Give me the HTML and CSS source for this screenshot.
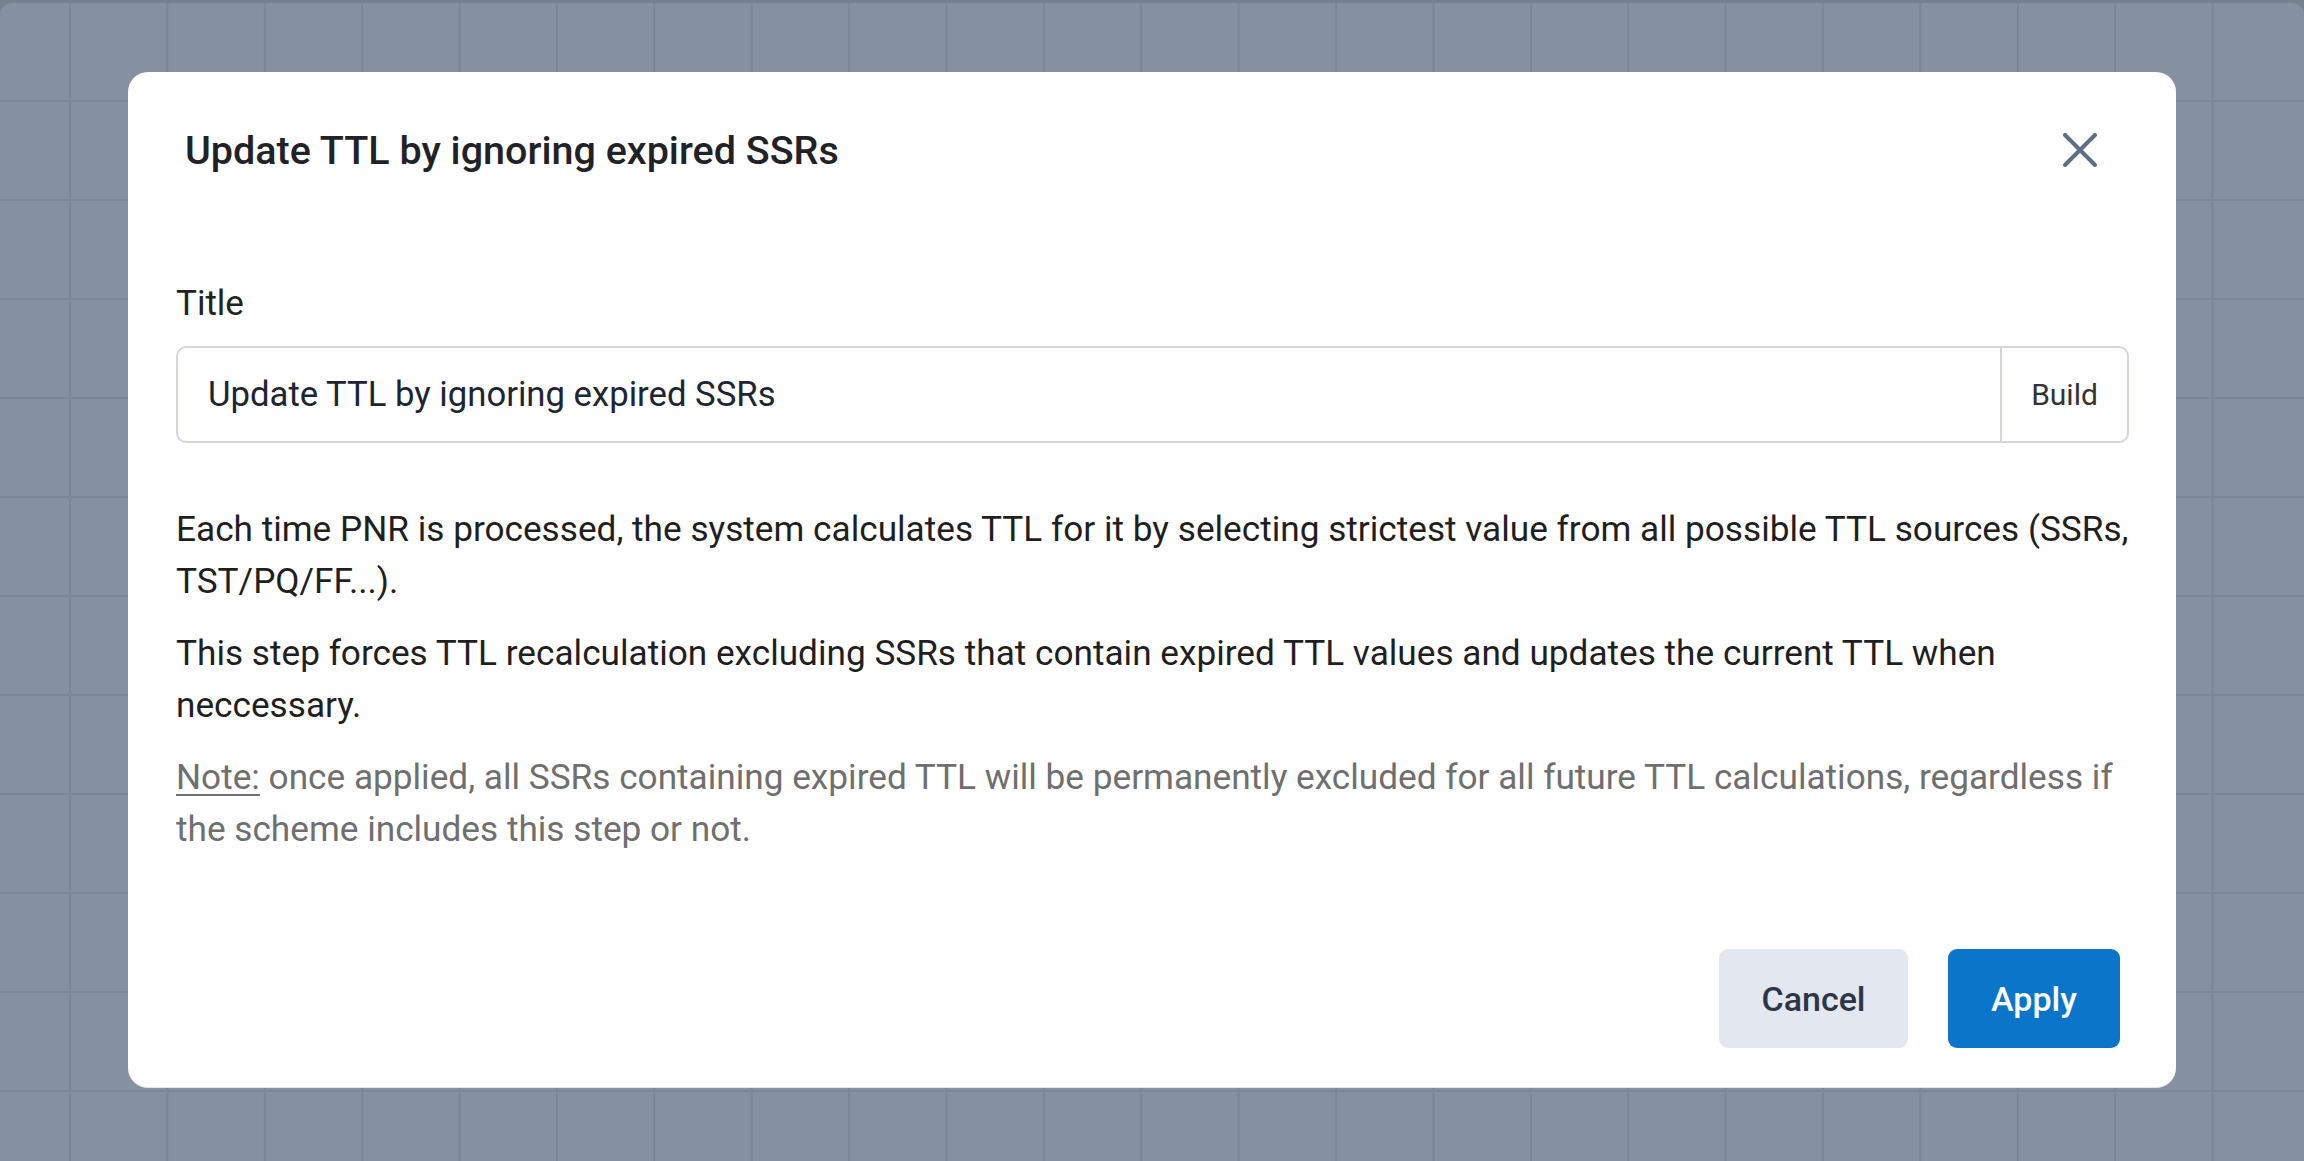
FILE: index.html
```html
<!DOCTYPE html>
<html lang="en">
<head>
    <meta charset="UTF-8">
    <meta name="viewport" content="width=device-width, initial-scale=1.0">
    <title>Update TTL</title>

    <!-- CSS Styles -->
    <link rel="stylesheet" href="styles.css">
</head>
<body>

    <!-- Canvas behind the dialog -->
    <div class="canvas">

        <!-- Dialog -->
        <div class="modal">
            <div class="modal-header">
                <h2 class="modal-title">Update TTL by ignoring expired SSRs</h2>
                <button class="close-btn" aria-label="Close">
                    <svg viewBox="0 0 34 34" width="34" height="34">
                        <path d="M2 2 L32 32 M32 2 L2 32" stroke="currentColor" stroke-width="4" stroke-linecap="round" fill="none"/>
                    </svg>
                </button>
            </div>

            <div class="modal-body">
                <label class="field-label">Title</label>
                <div class="field">
                    <div class="field-input">Update TTL by ignoring expired SSRs</div>
                    <button class="field-addon">Build</button>
                </div>

                <p class="text">Each time PNR is processed, the system calculates TTL for it by selecting strictest value from all possible TTL sources (SSRs, TST/PQ/FF...).</p>
                <p class="text">This step forces TTL recalculation excluding SSRs that contain expired TTL values and updates the current TTL when neccessary.</p>
                <p class="text note"><span class="note-label">Note:</span> once applied, all SSRs containing expired TTL will be permanently excluded for all future TTL calculations, regardless if the scheme includes this step or not.</p>
            </div>

            <div class="modal-footer">
                <button class="btn btn-secondary">Cancel</button>
                <button class="btn btn-primary">Apply</button>
            </div>
        </div>

    </div>

</body>
</html>
```

FILE: styles.css
```css
/* Reset styles */
* {
    margin: 0;
    padding: 0;
    box-sizing: border-box;
}

body {
    font-family: Roboto, 'Liberation Sans', sans-serif;
    background: #76818f;
    height: 100vh;
    overflow: hidden;
    padding-top: 3px;
}

/* Grid canvas */
.canvas {
    height: 100%;
    border-radius: 12px 12px 0 0;
    background-color: #8590a0;
    background-image:
        linear-gradient(to right, #7b8697 2px, transparent 2px),
        linear-gradient(to bottom, #7b8697 2px, transparent 2px);
    background-size: 97.4px 99px;
    background-position: 69px 97px;
    display: flex;
    justify-content: center;
    align-items: flex-start;
    padding-top: 69px;
}

/* Dialog */
.modal {
    width: 2048px;
    background: #fff;
    border-radius: 20px;
    padding: 48px 47px 39px 48px;
    border-bottom: 1px solid #dfe3ea;
}

.modal-header {
    display: flex;
    justify-content: space-between;
    align-items: center;
    height: 60px;
}

.modal-title {
    font-size: 39.5px;
    font-weight: 500;
    color: #1f2226;
    padding-left: 9px;
}

.close-btn {
    background: none;
    border: none;
    color: #5e6e85;
    width: 34px;
    height: 34px;
    margin-right: 32px;
    cursor: pointer;
}

.close-btn svg {
    display: block;
}

.modal-body {
    padding-top: 103px;
}

.field-label {
    display: block;
    font-size: 35px;
    line-height: 42px;
    color: #222;
}

.field {
    display: flex;
    height: 97px;
    margin-top: 21px;
    border: 2px solid #d4d6db;
    border-radius: 10px;
}

.field-input {
    flex: 1;
    display: flex;
    align-items: center;
    padding-left: 30px;
    font-size: 34.7px;
    line-height: 1.2;
    color: #1d2533;
}

.field-addon {
    width: 127px;
    background: none;
    border: none;
    border-left: 2px solid #d4d6db;
    font-family: inherit;
    font-size: 30px;
    color: #333;
}

.text {
    font-size: 35.2px;
    line-height: 52px;
    color: #1f1f1f;
    margin-top: 20px;
}

.field + .text {
    margin-top: 60px;
}

.note {
    color: #6f6f6f;
}

.note-label {
    text-decoration: underline;
    text-underline-offset: 5px;
    text-decoration-thickness: 2px;
}

/* Footer buttons */
.modal-footer {
    display: flex;
    justify-content: flex-end;
    gap: 40px;
    margin-top: 94px;
    padding-right: 9px;
}

.btn {
    height: 99px;
    border: none;
    border-radius: 9px;
    font-family: inherit;
    font-size: 34px;
    font-weight: 500;
    cursor: pointer;
}

.btn-secondary {
    width: 189px;
    background: #e3e8f0;
    color: #2c3648;
}

.btn-primary {
    width: 172px;
    background: #0a75c9;
    color: #fff;
}
```
